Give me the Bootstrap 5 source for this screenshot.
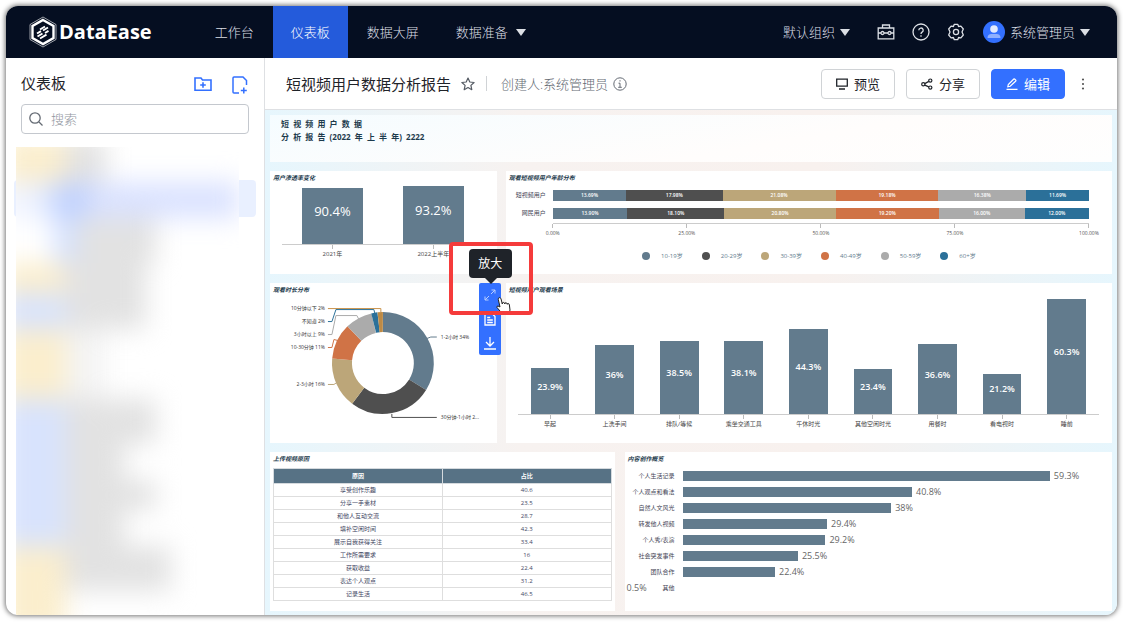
<!DOCTYPE html>
<html lang="zh-CN">
<head>
<meta charset="utf-8">
<meta name="viewport" content="width=device-width, initial-scale=1">
<title>DataEase - 仪表板</title>
<link href="https://cdn.jsdelivr.net/npm/bootstrap@5.3.0/dist/css/bootstrap.min.css" rel="stylesheet">
<style>
:root{--slate:#627b8d;--dark:#4f4f4f;--sand:#bca679;--clay:#d07346;--silver:#ababab;--teal:#2b7099;--brand:#3370ff}
body{font-family:"Open Sans","Noto Sans CJK SC",sans-serif;font-size:13px;line-height:20px;color:#1f2329;background:#fff;padding:6px 6px 7px}
svg{display:block;flex:none}
.shell{min-height:calc(100vh - 13px);border-radius:12px;overflow:hidden;box-shadow:0 0 5px 1px rgba(0,0,0,.55);background:#fff}
.topbar{background:#050e21;height:52px;padding:0 27px 0 21px;flex-wrap:nowrap}
.brandname{font-size:20px;font-weight:700;color:#fff;line-height:24px}
.mainmenu{margin-left:45px;height:52px;gap:1px}
.mainmenu a{color:#dcdfe5;text-decoration:none;font-weight:300}
.mainmenu a{padding:0 18px;height:52px;display:flex;align-items:center;gap:8px;white-space:nowrap}
.mainmenu a.active{background:#245bdb;color:#fff}
.plainbtn{background:none;border:0;padding:0;color:inherit;display:flex;align-items:center}
.orgmenu,.usermenu{gap:5px;white-space:nowrap;color:#dcdfe5;font-weight:300}
.tri{width:0;height:0;border:5px solid transparent;border-top:7px solid #dcdfe5;border-bottom:0}
.toolicons{gap:17px;color:#dcdfe5;margin:0 18px 0 27px}
.sidebar{width:259px;flex:none;border-right:1px solid #dee0e3}
.sidehead{padding:10px 15px 0 15px;height:46px}
.newicons{gap:19px;padding-top:8px}
.h15{font-size:15px;line-height:22px;font-weight:400;margin:0}
.searchbox{margin:0 15px;height:30px;border:1px solid #c4c8ce;border-radius:4px;padding:0 7px}
.searchbox input{border:0;outline:0;min-width:0;background:none;font-weight:300;padding:0}
.searchbox input::placeholder{color:#8f959e;opacity:1}
.treewrap{position:relative;margin-top:13px;padding:0 25px 0 10px;flex:1}
.selrow{position:absolute;left:8px;right:8px;top:33px;height:37px;border-radius:4px;background:#e9f0ff}
.veil{position:relative;overflow:hidden;height:100%;background:#fff}
.smear{filter:blur(13px);margin:-10px 0 -80px -12px}
.smear div{display:flex}
.smear i{width:62px}
.smear b{background:#e2e2e2}
.y i{background:#fbeecd}.u i{background:#d8e3fd}
.s b{background:#dae2ff}.s i{width:50px;background:linear-gradient(90deg,#f0f4ff 50%,#dbe5ff)}
.s u{width:34px;background:#bfd1ff}
.g i{width:50px;background:#fff}.g u{width:22px;background:#d4e1ff}
.k30{height:30px}.k36{height:36px}.k45{height:45px}.k70{height:70px}
.w40{width:40px}.w60{width:58px}.w80{width:80px}.w90{width:90px}.w120{width:105px}.wfull{flex:1}
.n b{background:#f4f4f4}
.pagehead{height:52px;border-bottom:1px solid #dee0e3;padding:0 31px 0 21px}
.starbtn{margin-left:10px}
.creator{color:#646a73;font-weight:300;gap:5px}
.vline{width:1px;height:15px;background:#d0d3d6;margin:0 14px 0 11px}
.act{width:74px;height:30px;font-size:13px;line-height:20px;padding:0;border-radius:4px;display:flex;align-items:center;justify-content:center;gap:6px}
.act.line{border:1px solid #d0d3d6;background:#fff;color:#1f2329}
.act.full{background:var(--brand);border:1px solid var(--brand);color:#fff}
.board{padding:5px 5px 4px;gap:9px;background:linear-gradient(90deg,#e6f6fd,#f7f2f0 30%,#f8f1ee 65%,#e6f6fd)}
.panel{background:#fff;position:relative;min-width:0}
.lead-panel{height:47px;padding:2px 11px;background:linear-gradient(170deg,#f5fcff,#fffdfc 60%,#fefefe);font-size:8px;line-height:13px;font-weight:700;color:#1c3a4c;white-space:pre}
.ptitle{font-size:6px;line-height:14px;font-weight:700;font-style:italic;color:#1c3a4c;margin:0;padding-left:3px;white-space:nowrap}
.small-left{flex:227 1 0}.small-right{flex:607 1 0}
.half-left{flex:345 1 0}.half-right{flex:488 1 0}
.r1{height:103px}.r2{height:160px}.r3{height:159px}
.plot{margin:0 13px 0 12px;border-bottom:1px solid #ccc;display:flex;align-items:flex-end}
.plot>div{flex:1;height:100%;display:flex;justify-content:center;align-items:flex-end}
.colbar{width:60%;background:var(--slate);color:#fff;display:flex;align-items:center;justify-content:center;padding-bottom:9px;font-weight:600;font-size:9px;line-height:12px}
.p60{height:60px}.p60 .colbar{font-size:13px;font-weight:400;padding-bottom:11px}
.p115{height:116px;margin-top:2px}
.cats{margin:0 13px 0 12px;display:flex;font-size:6px;line-height:11px;color:#444}
.cats span{flex:1;text-align:center;white-space:nowrap}
.cats span::before{content:"";display:block;width:1px;height:4px;background:#bbb;margin:0 auto}
.ages{padding-top:5px}
.srow{display:flex;gap:7px;margin:0 23px 7px 0;height:11px;line-height:11px;font-size:5px}
.srow>span{width:40px;text-align:right;font-size:6px;color:#445;white-space:nowrap}
.srow>div{flex:1;display:flex}
.srow b{color:#fff;text-align:center;font-weight:600}
.c1{background:var(--slate)}.c2{background:var(--dark)}.c3{background:var(--sand)}.c4{background:var(--clay)}.c5{background:var(--silver)}.c6{background:var(--teal)}
.xaxis{margin:-3px 23px 0 47px;border-top:1px solid #ccc;display:flex;justify-content:space-between;font-size:5px;line-height:10px;color:#555}
.xaxis span{width:0;display:flex;flex-direction:column;align-items:center}
.xaxis span::before{content:"";width:1px;height:4px;background:#bbb;flex:none}
.keys{display:flex;justify-content:center;gap:19px;margin-top:13px;font-size:6px;line-height:10px;color:#627b8d}
.keys span{display:flex;align-items:center;gap:11px}
.keys i{width:8px;height:8px;border-radius:50%}
.hovertools{position:absolute;top:0;right:-4px;width:22px;z-index:5;background:var(--brand);border-radius:2px}
.hovertools button{width:22px;height:24px;border:0;background:none;padding:0;color:#fff;display:flex;align-items:center;justify-content:center}
.tipbox{position:absolute;left:-10px;top:-34px;width:43px;height:29px;border-radius:4px;background:#1f2329;color:#fff;font-size:12px;line-height:29px;text-align:center}
.tipbox::after{content:"";position:absolute;left:16px;top:29px;border:6px solid transparent;border-top:6px solid #1f2329;border-bottom:0}
.hilite{position:absolute;left:-30px;top:-41px;width:84px;height:73px;border:4px solid #f53b3b;border-radius:4px;pointer-events:none}
.pointer{position:absolute;left:17px;top:13px}
.donut{position:absolute;inset:0;width:100%;height:100%;font-size:5px}
.reasons{width:calc(100% - 6px);margin:2px 3px 0;font-size:6px;line-height:12px;text-align:center;color:#3f4763;table-layout:fixed;border-collapse:collapse}
.reasons th{background:#577285;color:#fff;height:15px;padding:0;border:1px solid #d5dade}
.reasons td{padding:0;height:13px;border:1px solid #dedede}
.hbars{padding-top:2px}
.hrow{display:flex;align-items:center;height:16px;gap:8px;padding-right:13px;line-height:12px}
.hrow>span{width:50px;flex:none;text-align:right;font-size:6px;color:#445;white-space:nowrap}
.hrow>div{flex:1;display:flex;align-items:center;gap:4px;font-size:9px;color:#666}
.hrow i{height:10px;background:var(--slate);flex:none}
.hrow em{font-style:normal;font-size:9px;color:#666;float:left;margin-left:2px}
</style>
</head>
<body>
<div class="shell d-flex flex-column">
<nav class="topbar navbar">
  <a href="#" class="d-flex align-items-center text-decoration-none" aria-label="DataEase">
    <svg width="32" height="34" viewBox="0 0 32 34" fill="none" stroke="#fff">
      <path d="M16 2 29 9.500V24.500L16 32 3 24.500V9.500Z" stroke-width="1" opacity=".6"/>
      <path d="M16 5 26.500 11V23L16 29 5.500 23V11Z" stroke-width="2.400"/>
      <path d="M13 14.500 18 11.500M10 18.500l4-2.400M16 15.500 21 12.500M10.500 21.500l5-3M18 18l3.500-2.100M13 23.500l6.500-3.900" stroke-width="1.900"/>
    </svg>
    <span class="brandname">DataEase</span>
  </a>
  <div class="mainmenu d-flex">
    <a href="#">工作台</a><a href="#" class="active">仪表板</a><a href="#">数据大屏</a><a href="#">数据准备<span class="tri"></span></a>
  </div>
  <button class="plainbtn orgmenu ms-auto">默认组织<span class="tri"></span></button>
  <div class="toolicons d-flex align-items-center">
    <button class="plainbtn" aria-label="工具箱"><svg width="18" height="18" viewBox="0 0 18 18" fill="none" stroke="currentColor" stroke-width="1.300"><path d="M5.500 5V2h7v3M1.200 5h15.600v10.800H1.200ZM1 10h3M7 10h4M14 10h3"/><circle cx="5.500" cy="10" r="1.500"/><circle cx="12.500" cy="10" r="1.500"/></svg></button>
    <button class="plainbtn" aria-label="帮助"><svg width="18" height="18" viewBox="0 0 18 18" fill="none" stroke="currentColor" stroke-width="1.300"><circle cx="9" cy="9" r="8"/><path d="M6.800 7.200a2.200 2.200 0 1 1 3.300 1.900c-.8.500-1.100.9-1.100 1.900M9 12.300v1.400"/></svg></button>
    <button class="plainbtn" aria-label="设置"><svg width="18" height="18" viewBox="0 0 18 18" fill="none" stroke="currentColor" stroke-width="1.300" stroke-linejoin="round"><path d="M7.300 1.300H10.700L11.600 3.500 13.900 3.200 16.300 6 15 9 16.300 12 13.900 14.800 11.600 14.500 10.700 16.700H7.300L6.400 14.500 4.100 14.800 1.700 12 3 9 1.700 6 4.100 3.200 6.400 3.500Z"/><circle cx="9" cy="9" r="2.600"/></svg></button>
  </div>
  <button class="plainbtn usermenu"><svg width="22" height="22" viewBox="0 0 22 22"><circle cx="11" cy="11" r="11" fill="#3370ff"/><circle cx="11" cy="8" r="3.800" fill="#e3ebff"/><path d="M4.500 17q0-4 4-4h5q4 0 4 4Z" fill="#8fb0ff"/></svg>系统管理员<span class="tri"></span></button>
</nav>
<div class="d-flex flex-grow-1">
  <aside class="sidebar d-flex flex-column">
    <div class="sidehead d-flex align-items-start">
      <h1 class="h15 me-auto mt-1">仪表板</h1>
      <div class="newicons d-flex align-items-start">
      <button class="plainbtn" aria-label="新建文件夹"><svg width="18" height="16" viewBox="0 0 18 16" fill="none" stroke="#3370ff" stroke-width="1.600"><path d="M1 2h6l1.500 2H17v10.200H1Z"/><path d="M9 6.200v5.600M6.200 9h5.600"/></svg></button>
      <button class="plainbtn" aria-label="新建仪表板"><svg width="18" height="18" viewBox="0 0 18 18" fill="none" stroke="#3370ff" stroke-width="1.500"><path d="M8 17H3a1 1 0 0 1-1-1V2a1 1 0 0 1 1-1h9l3.500 3.500V9M12.800 11.500v6M9.800 14.500h6"/></svg></button>
      </div>
    </div>
    <div class="searchbox d-flex align-items-center gap-2">
      <svg width="14" height="14" viewBox="0 0 14 14" fill="none" stroke="#646a73" stroke-width="1.300"><circle cx="6" cy="6" r="5.200"/><path d="m10 10 3.500 3.500"/></svg>
      <input class="flex-grow-1" type="text" placeholder="搜索" aria-label="搜索">
    </div>
    <div class="treewrap">
      <div class="selrow"></div>
      <div class="veil"><div class="smear">
        <div class="y k45"><i></i><b class="w40"></b></div>
        <div class="s k36"><i></i><u></u><b class="wfull"></b></div>
        <div class="g k45"><i></i><u></u><b class="w80"></b></div>
        <div class="y k30"><i></i><b class="w80"></b></div>
        <div class="u k36"><i></i><b class="w80"></b></div>
        <div class="y k70 n"><i></i><b class="w40"></b></div>
        <div class="u k45"><i></i><b class="w90"></b></div>
        <div class="u k36"><i></i><b class="w60"></b></div>
        <div class="u k30"><i></i><b class="w90"></b></div>
        <div class="u k36"><i></i><b class="w60"></b></div>
        <div class="y k45"><i></i><b class="w120"></b></div>
        <div class="y k45"><i></i></div>
      </div></div>
    </div>
  </aside>
  <main class="flex-grow-1 d-flex flex-column overflow-hidden">
    <header class="pagehead d-flex align-items-center">
      <h2 class="h15 text-nowrap">短视频用户数据分析报告</h2>
      <button class="plainbtn starbtn" aria-label="收藏"><svg width="14" height="14" viewBox="0 0 14 14" fill="none" stroke="#555b64" stroke-width="1.200" stroke-linejoin="round"><path d="m7 1 1.800 4 4.300.5-3.200 2.900.9 4.300L7 10.500l-3.800 2.200.9-4.300L.9 5.500 5.200 5Z"/></svg></button>
      <span class="vline"></span>
      <div class="creator d-flex align-items-center text-nowrap">创建人:系统管理员<svg width="14" height="14" viewBox="0 0 14 14" fill="none" stroke="currentColor"><circle cx="7" cy="7" r="6.200"/><path d="M7 3.200v1.300M5.500 6.200H7v4M5.200 10.300h3.600"/></svg></div>
      <div class="d-flex align-items-center ms-auto" style="gap:11px">
        <button class="act line"><svg width="12" height="12" viewBox="0 0 12 12" fill="none" stroke="currentColor" stroke-width="1.300"><path d="M.7 1.200h10.600v7H.7ZM3 11h6"/></svg>预览</button>
        <button class="act line"><svg width="12" height="12" viewBox="0 0 12 12" fill="none" stroke="currentColor" stroke-width="1.200"><circle cx="2.300" cy="6.300" r="1.600"/><circle cx="9.300" cy="2.600" r="1.600"/><circle cx="9.300" cy="9.600" r="1.600"/><path d="m3.800 5.600 4-2.200M3.800 7.100l4 1.800"/></svg>分享</button>
        <button class="act full"><svg width="12" height="12" viewBox="0 0 12 12" fill="none" stroke="currentColor" stroke-width="1.200"><path d="M1.800 8.800 2.300 6.500 7.800 1q.4-.3.800 0l1.200 1.200q.3.400 0 .8L4.200 8.300ZM.5 11.300h11"/></svg>编辑</button>
        <button class="plainbtn ps-1" aria-label="更多"><svg width="6" height="12" viewBox="0 0 6 12" fill="#555"><circle cx="3" cy="1.500" r="1.100"/><circle cx="3" cy="6" r="1.100"/><circle cx="3" cy="10.500" r="1.100"/></svg></button>
      </div>
    </header>
    <div class="board d-flex flex-column flex-grow-1">
      <section class="lead-panel">短  视  频  用  户  数  据
分  析  报  告  (2022  年  上  半  年)  2222</section>

      <div class="d-flex r1" style="gap:9px">
        <section class="panel small-left">
          <h3 class="ptitle">用户渗透率变化</h3>
          <div class="plot p60">
            <div><div class="colbar" style="height:94.9%">90.4%</div></div>
            <div><div class="colbar" style="height:97.5%">93.2%</div></div>
          </div>
          <div class="cats"><span>2021年</span><span>2022上半年</span></div>
        </section>
        <section class="panel small-right">
          <h3 class="ptitle">观看短视频用户年龄分布</h3>
          <div class="ages">
          <div class="srow"><span>短视频用户</span><div><b class="c1" style="width:13.69%">13.69%</b><b class="c2" style="width:17.98%">17.98%</b><b class="c3" style="width:21.08%">21.08%</b><b class="c4" style="width:19.18%">19.18%</b><b class="c5" style="width:16.38%">16.38%</b><b class="c6" style="width:11.69%">11.69%</b></div></div>
          <div class="srow"><span>网民用户</span><div><b class="c1" style="width:13.9%">13.90%</b><b class="c2" style="width:18.1%">18.10%</b><b class="c3" style="width:20.8%">20.80%</b><b class="c4" style="width:19.2%">19.20%</b><b class="c5" style="width:16%">16.00%</b><b class="c6" style="width:12%">12.00%</b></div></div>
          <div class="xaxis"><span>0.00%</span><span>25.00%</span><span>50.00%</span><span>75.00%</span><span>100.00%</span></div>
          <div class="keys"><span><i class="c1"></i>10-19岁</span><span><i class="c2"></i>20-29岁</span><span><i class="c3"></i>30-39岁</span><span><i class="c4"></i>40-49岁</span><span><i class="c5"></i>50-59岁</span><span><i class="c6"></i>60+岁</span></div>
          </div>
        </section>
      </div>

      <div class="d-flex r2" style="gap:9px">
        <section class="panel small-left" style="z-index:2">
          <h3 class="ptitle">观看时长分布</h3>
          <svg class="donut" viewBox="0 0 227 160" fill="none">
            <g stroke-width="20">
              <path d="M113 39A41 41 0 0 1 147.800 101.700" stroke="#627b8d"/>
              <path d="M147.800 101.700A41 41 0 0 1 88.300 112.700" stroke="#4f4f4f"/>
              <path d="M88.300 112.700A41 41 0 0 1 72.200 76.400" stroke="#bca679"/>
              <path d="M72.200 76.400A41 41 0 0 1 84.500 50.500" stroke="#d07346"/>
              <path d="M84.500 50.500A41 41 0 0 1 103.800 40.100" stroke="#ababab"/>
              <path d="M103.800 40.100A41 41 0 0 1 108.700 39.200" stroke="#2b7099"/>
              <path d="M108.700 39.200A41 41 0 0 1 113 39" stroke="#bd8a45"/>
            </g>
            <path d="M58 25.500H111V29" stroke="#c9934a"/>
            <path d="M58 38.500h4l4-12h38l1 4" stroke="#2b7099"/>
            <path d="M58 51.500h4l4-19h21l2 4" stroke="#ababab"/>
            <path d="M58 64.500h4l2-8 4 1" stroke="#d07346"/>
            <path d="M58 101.500h6l3-2" stroke="#bca679"/>
            <path d="M157 55.500l4-1.500h6" stroke="#627b8d"/>
            <path d="M122 131v3.500h45" stroke="#4f4f4f"/>
            <g fill="#333" text-anchor="end">
              <text x="55" y="27">10分钟以下 2%</text><text x="55" y="40">不知道 2%</text><text x="55" y="53">3小时以上 9%</text><text x="55" y="66">10-30分钟 11%</text><text x="55" y="103">2-3小时 16%</text>
            </g>
            <g fill="#333"><text x="171" y="56">1-2小时 34%</text><text x="171" y="136">30分钟-1小时 2...</text></g>
          </svg>
          <div class="hovertools">
            <button aria-label="放大"><svg width="12" height="12" viewBox="0 0 12 12" fill="none" stroke="#b8cdff"><path d="M7.500 1H11v3.500M11 1 7 5M4.500 11H1V7.500M1 11l4-4"/></svg></button>
            <button aria-label="查看数据"><svg width="12" height="13" viewBox="0 0 12 13" fill="none" stroke="currentColor" stroke-width="1.300"><path d="M1 1h7.500L11 3.500V12H1ZM3.200 4.500h3M3.200 7h5.600M3.200 9.500h5.600"/></svg></button>
            <button aria-label="导出"><svg width="14" height="14" viewBox="0 0 14 14" fill="none" stroke="currentColor" stroke-width="1.300"><path d="M7 1v9M3 6l4 4 4-4M1 13h12"/></svg></button>
            <svg class="pointer" width="15" height="20" viewBox="0 0 15 20" fill="#fff" stroke="#222" stroke-linejoin="round"><path d="M4 11 2.300 3.500Q2 2 3.200 1.700T5 2.800L6.300 8q-.2-1.500 1-1.600T8.900 8q-.2-1.200.9-1.300T11.300 8.300q0-1 .9-.9T13.400 9L14 14l-1 4H6.500L4 15 1 11.500q-.5-1.500 1-1.500Z"/></svg>
            <div class="tipbox" role="tooltip">放大</div>
            <div class="hilite"></div>
          </div>
        </section>
        <section class="panel small-right">
          <h3 class="ptitle">短视频用户观看场景</h3>
          <div class="plot p115">
            <div><div class="colbar" style="height:39.6%">23.9%</div></div>
            <div><div class="colbar" style="height:59.7%">36%</div></div>
            <div><div class="colbar" style="height:63.8%">38.5%</div></div>
            <div><div class="colbar" style="height:63.2%">38.1%</div></div>
            <div><div class="colbar" style="height:73.5%">44.3%</div></div>
            <div><div class="colbar" style="height:38.8%">23.4%</div></div>
            <div><div class="colbar" style="height:60.7%">36.6%</div></div>
            <div><div class="colbar" style="height:35.2%">21.2%</div></div>
            <div><div class="colbar" style="height:100%">60.3%</div></div>
          </div>
          <div class="cats"><span>早起</span><span>上洗手间</span><span>排队/等候</span><span>乘坐交通工具</span><span>午休时光</span><span>其他空闲时光</span><span>用餐时</span><span>看电视时</span><span>睡前</span></div>
        </section>
      </div>

      <div class="d-flex r3" style="gap:10px">
        <section class="panel half-left">
          <h3 class="ptitle">上传视频原因</h3>
          <table class="reasons">
            <thead><tr><th>原因</th><th>占比</th></tr></thead>
            <tbody>
            <tr><td>享受创作乐趣</td><td>40.6</td></tr>
            <tr><td>分享一手素材</td><td>23.5</td></tr>
            <tr><td>和他人互动交流</td><td>28.7</td></tr>
            <tr><td>填补空闲时间</td><td>42.3</td></tr>
            <tr><td>展示自我获得关注</td><td>33.4</td></tr>
            <tr><td>工作所需要求</td><td>16</td></tr>
            <tr><td>获取收益</td><td>22.4</td></tr>
            <tr><td>表达个人观点</td><td>31.2</td></tr>
            <tr><td>记录生活</td><td>46.5</td></tr>
            </tbody>
          </table>
        </section>
        <section class="panel half-right">
          <h3 class="ptitle">内容创作概览</h3>
          <div class="hbars">
            <div class="hrow"><span>个人生活记录</span><div><i style="width:88.2%"></i>59.3%</div></div>
            <div class="hrow"><span>个人观点和看法</span><div><i style="width:55.1%"></i>40.8%</div></div>
            <div class="hrow"><span>自然人文风光</span><div><i style="width:50.1%"></i>38%</div></div>
            <div class="hrow"><span>转发他人视频</span><div><i style="width:34.7%"></i>29.4%</div></div>
            <div class="hrow"><span>个人秀/表演</span><div><i style="width:34.3%"></i>29.2%</div></div>
            <div class="hrow"><span>社会突发事件</span><div><i style="width:27.7%"></i>25.5%</div></div>
            <div class="hrow"><span>团队合作</span><div><i style="width:22.2%"></i>22.4%</div></div>
            <div class="hrow"><span><em>0.5%</em>其他</span></div>
          </div>
        </section>
      </div>
    </div>
  </main>
</div>
</div>
<script src="https://cdn.jsdelivr.net/npm/bootstrap@5.3.0/dist/js/bootstrap.bundle.min.js"></script>
</body>
</html>
